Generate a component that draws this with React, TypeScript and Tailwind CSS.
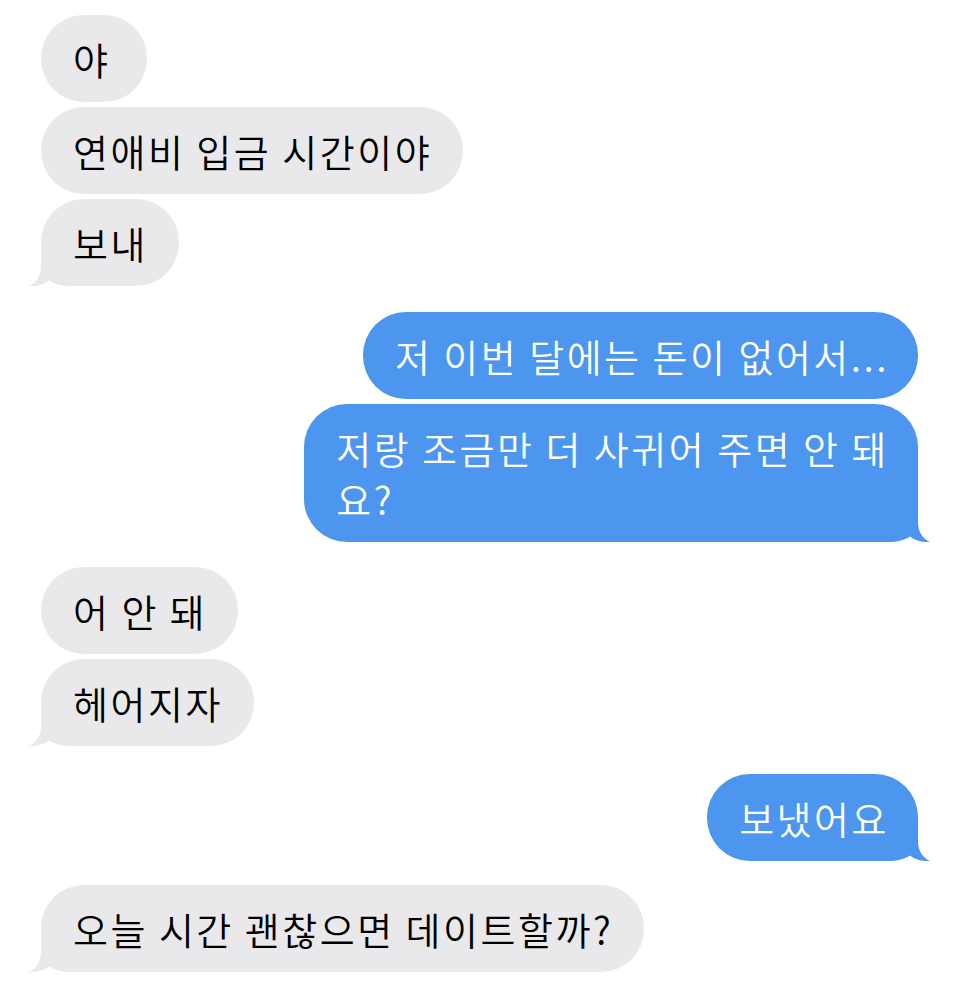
import React from "react";

type Side = "left" | "right";

function Tail({ side, color }: { side: Side; color: string }) {
  const cls =
    side === "left"
      ? "absolute left-[-12px] bottom-0 w-[60px] h-[42px]"
      : "absolute right-[-12px] bottom-0 w-[60px] h-[42px] -scale-x-100";
  return (
    <svg className={cls} viewBox="0 0 60 42" aria-hidden="true">
      <path
        d="M12 0 L12 22 C12 32 7 39 0 42 C8 42.5 15 40.5 20 36.5 C25 40 32 42 43 42 L60 42 L60 0 Z"
        fill={color}
      />
    </svg>
  );
}

function Bubble({
  side,
  tail,
  children,
}: {
  side: Side;
  tail?: boolean;
  children: React.ReactNode;
}) {
  const gray = side === "left";
  const color = gray ? "#e9e9eb" : "#4c96ef";
  return (
    <div
      className={
        gray
          ? "relative min-w-[106px] rounded-[43px] bg-[#e9e9eb] text-black pl-[32px] pr-[31px] py-[18px] leading-[51px] whitespace-nowrap"
          : "relative min-w-[106px] rounded-[43px] bg-[#4c96ef] text-white pl-[32px] pr-[29px] py-[18px] leading-[51px] whitespace-nowrap"
      }
    >
      {tail && <Tail side={side} color={color} />}
      <span className="relative">{children}</span>
    </div>
  );
}

export default function App() {
  return (
    <div className="w-[959px] h-[993px] bg-white overflow-hidden font-['Noto_Sans_CJK_KR','Noto_Sans',sans-serif] text-[38px] font-[350] tracking-[2.5px] pt-[15px] px-[41px] flex flex-col">
      <div className="flex flex-col items-start gap-[5px]">
        <Bubble side="left">야</Bubble>
        <Bubble side="left">연애비 입금 시간이야</Bubble>
        <Bubble side="left" tail>
          보내
        </Bubble>
      </div>

      <div className="flex flex-col items-end gap-[5px] mt-[26px]">
        <Bubble side="right">저 이번 달에는 돈이 없어서...</Bubble>
        <Bubble side="right" tail>
          저랑 조금만 더 사귀어 주면 안 돼
          <br />
          요?
        </Bubble>
      </div>

      <div className="flex flex-col items-start gap-[5px] mt-[25px]">
        <Bubble side="left">어 안 돼</Bubble>
        <Bubble side="left" tail>
          헤어지자
        </Bubble>
      </div>

      <div className="flex flex-col items-end mt-[28px]">
        <Bubble side="right" tail>
          보냈어요
        </Bubble>
      </div>

      <div className="flex flex-col items-start mt-[24px]">
        <Bubble side="left" tail>
          오늘 시간 괜찮으면 데이트할까?
        </Bubble>
      </div>
    </div>
  );
}
